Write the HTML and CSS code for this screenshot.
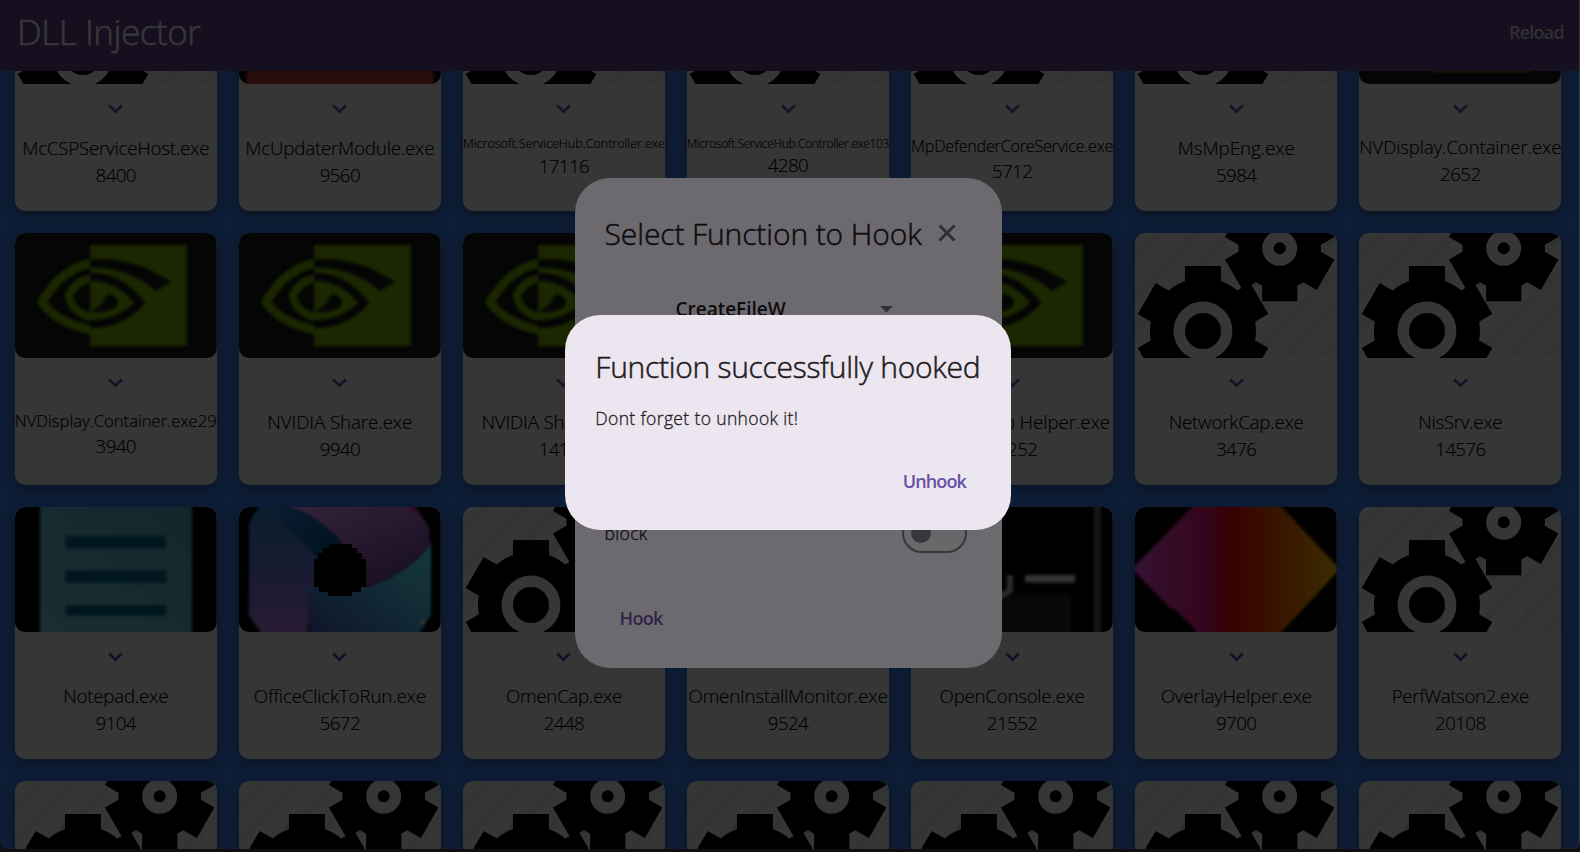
FILE: index.html
```html
<!DOCTYPE html>
<html lang="en">
<head>
<meta charset="utf-8">
<title>DLL Injector</title>
<link rel="stylesheet" href="styles.css">
</head>
<body>
<svg class="defs" aria-hidden="true">
  <defs>
    <pattern id="stripes" width="25.2" height="25.2" patternUnits="userSpaceOnUse" patternTransform="translate(20 0) rotate(45)">
      <rect width="8" height="25.2" fill="#333"/>
    </pattern>
    <filter id="soft" x="-10%" y="-10%" width="120%" height="120%" color-interpolation-filters="sRGB"><feGaussianBlur stdDeviation="1.8"/></filter>
    <clipPath id="eyeLeft"><rect width="75" height="125"/></clipPath>
    <clipPath id="eyeRight"><rect x="75" width="97" height="125"/></clipPath>
    <linearGradient id="note" x1="1" y1="0" x2="0" y2="1"><stop offset="0" stop-color="#10272b"/><stop offset="1" stop-color="#1b2d33"/></linearGradient>
    <linearGradient id="rainbow"><stop offset="0" stop-color="#351235"/><stop offset=".36" stop-color="#33051a"/><stop offset=".48" stop-color="#380000"/><stop offset=".7" stop-color="#371400"/><stop offset="1" stop-color="#3a2d00"/></linearGradient>
    <linearGradient id="offA" x1="0" y1="0" x2="0" y2="1"><stop offset="0" stop-color="#0a1c2c"/><stop offset=".5" stop-color="#171a30"/><stop offset="1" stop-color="#2a1b33"/></linearGradient>
    <linearGradient id="offB" x1="0" y1="0" x2=".7" y2="1"><stop offset="0" stop-color="#35233a"/><stop offset="1" stop-color="#190f22"/></linearGradient>
    <linearGradient id="offC" x1="0" y1="1" x2="1" y2="0"><stop offset="0" stop-color="#101329"/><stop offset=".4" stop-color="#102434"/><stop offset="1" stop-color="#153a39"/></linearGradient>
    <linearGradient id="offD" x1="0" y1="0" x2="1" y2=".4"><stop offset="0" stop-color="#0b1f33"/><stop offset="1" stop-color="#001321"/></linearGradient>

    <symbol id="gears" viewBox="0 0 201.7 125" preserveAspectRatio="none">
      <rect width="202" height="125" fill="#363636"/>
      <rect width="202" height="125" fill="url(#stripes)"/>
      <g transform="translate(68 98)">
        <circle r="53"/>
        <rect x="-18" y="-65" width="36" height="130"/><rect x="-18" y="-65" width="36" height="130" transform="rotate(60)"/><rect x="-18" y="-65" width="36" height="130" transform="rotate(120)"/>
        <circle r="29.5" fill="#363636"/>
        <circle r="18"/>
      </g>
      <g transform="translate(144.7 15.3)">
        <circle r="41.3"/>
        <rect x="-17.6" y="-53" width="35.2" height="106"/><rect x="-17.6" y="-53" width="35.2" height="106" transform="rotate(60)"/><rect x="-17.6" y="-53" width="35.2" height="106" transform="rotate(120)"/>
        <circle r="17.5" fill="#363636"/>
        <circle r="6"/>
      </g>
    </symbol>

    <symbol id="nvidia" viewBox="0 0 201.7 125">
      <rect width="202" height="125" fill="#050505"/>
      <g filter="url(#soft)">
        <rect x="75" y="12" width="97" height="101" fill="#1a2700"/>
        <g clip-path="url(#eyeLeft)" fill="none" stroke="#1a2700">
          <path stroke-width="9" d="M82 30 Q50 31 27 69 Q45 93 82 98"/>
          <path stroke-width="8" d="M82 45 Q60 46 54 63 Q56 80 82 86"/>
        </g>
        <g clip-path="url(#eyeRight)" fill="#050505">
          <path d="M70 27 Q115 21 156 49 L141 58 Q112 32 70 35Z"/>
          <path fill="none" stroke="#050505" stroke-width="8" d="M70 44 Q102 41 125 70 Q103 93 70 91"/>
          <path d="M92 61 Q104 63 103 72 Q93 82 75 78 Q88 74 92 61Z"/>
        </g>
      </g>
    </symbol>

    <symbol id="notepad" viewBox="0 0 201.7 125">
      <rect width="202" height="125"/>
      <g filter="url(#soft)"><rect x="25" y="-8" width="152" height="141" fill="url(#note)"/>
      <g fill="#00171e"><rect x="50.500" y="29" width="100.500" height="12.500"/><rect x="50.500" y="63.500" width="100.500" height="12.500"/><rect x="50.500" y="98" width="100.500" height="10.500"/></g></g>
    </symbol>

    <symbol id="office" viewBox="0 0 201.7 125">
      <rect width="202" height="125"/>
      <g filter="url(#soft)">
        <path fill="url(#offA)" d="M10 16 L22 -4 H90 L101 62 L72 86 L68 130 H25 L10 108Z"/>
        <path fill="url(#offD)" d="M20 -4 H50 Q80 6 101 34 L98 60 L78 50 Q62 30 20 -4Z"/>
        <path fill="url(#offC)" d="M192 35 V108 L178 130 H70 L70 80 L101 70 L130 80 Q180 60 192 35Z"/>
        <path fill="url(#offB)" d="M42 -4 H174 L190 20 L191 38 Q180 58 130 80 L112 60 L101 34 Q80 8 42 -4Z"/>
        <circle cx="17" cy="9" r="2" fill="#00332c"/><circle cx="175" cy="2" r="2.500" fill="#330030"/><circle cx="184" cy="115" r="2.500" fill="#3a3836"/>
      </g>
      <path d="M84 41h6v-4h23v4h5v5h5v6h4v28h-5v5h-9v4h-24v-4h-9v-5h-5v-28h4v-6h5z"/>
    </symbol>

    <symbol id="console" viewBox="0 0 201.7 125">
      <rect width="202" height="125"/>
      <g filter="url(#soft)">
        <rect x="20" y="87" width="140" height="46" fill="#080808"/>
        <path d="M99 68V83L80 96" fill="none" stroke="#2b2b2b" stroke-width="6"/>
        <rect x="114" y="68" width="50" height="7.500" fill="#333"/>
        <rect x="183" y="-8" width="7" height="141" fill="#151717"/>
      </g>
    </symbol>

    <symbol id="diamond" viewBox="0 0 201.7 125">
      <rect width="202" height="125"/>
      <path filter="url(#soft)" fill="url(#rainbow)" d="M-3 62 L62 -5 H142 L205 62 L142 130 H61 V123 L39 102 H36Z"/>
    </symbol>

    <symbol id="mcafee" viewBox="0 0 201.7 125">
      <rect width="202" height="125"/>
      <rect x="7" y="-8" width="188" height="141" fill="#280b0b" filter="url(#soft)"/>
    </symbol>
  </defs>
</svg>

<div class="app">
  <header class="topbar">
    <h1 class="brand" data-w="183.5">DLL Injector</h1>
    <span class="reload" data-w="55">Reload</span>
  </header>
  <main class="viewport"><div class="grid" id="grid"></div></main>
</div>

<div class="layer">
  <section class="dialog picker">
    <div class="picker-head">
      <h2 class="title" data-w="317">Select Function to Hook</h2>
      <svg class="close" viewBox="0 0 18 18"><path d="M1.500 1.500l15 15M16.500 1.500l-15 15"/></svg>
    </div>
    <div class="select"><span data-w="110">CreateFileW</span><svg class="caret" viewBox="0 0 13 6.500"><path d="M0 0h13L6.500 6.500z"/></svg></div>
    <div class="option"><span data-w="43">block</span><span class="switch"><span class="knob"></span></span></div>
    <span class="action hook" data-w="43">Hook</span>
  </section>
</div>
<div class="layer">
  <section class="dialog notice">
    <h2 class="title" data-w="385">Function successfully hooked</h2>
    <p class="message" data-w="203">Dont forget to unhook it!</p>
    <span class="action unhook" data-w="63">Unhook</span>
  </section>
</div>
<script src="app.js"></script>
</body>
</html>
```
FILE: styles.css
```css
* { box-sizing: border-box; }
body {
  margin: 0;
  width: 1580px;
  height: 852px;
  overflow: hidden;
  background: #110f10;
  color: #000;
  font-family: "Open Sans", "Noto Sans", sans-serif;
  font-size: 18.75px;
}
h1, h2, p { margin: 0; font-weight: 400; }
.defs { position: absolute; width: 0; height: 0; }

.app {
  width: 1579px;
  height: 849px;
  display: flex;
  flex-direction: column;
  overflow: hidden;
  background: #0d1d36;
  border-radius: 0 0 8px 8px;
  box-shadow: 1px 0 0 #343638;
}
.topbar {
  flex: none;
  height: 71px;
  padding: 0 15px 7px 17px;
  display: flex;
  align-items: center;
  justify-content: space-between;
  background: #160f20;
  color: #383838;
}
.brand { font-size: 35px; line-height: 48px; white-space: nowrap; font-weight: 300; -webkit-text-stroke: .6px; color: #383838; }
.reload { font-size: 18px; font-weight: 600; line-height: 26px; color: #303030; }

.viewport { flex: 1; min-height: 0; overflow: hidden; }
.grid {
  margin-top: -112px;
  padding: 0 17px 0 14.900px;
  display: grid;
  grid-template-columns: repeat(7, 201.7px);
  column-gap: 22.420px;
  row-gap: 22.4px;
}
.card {
  height: 251.7px;
  display: flex;
  flex-direction: column;
  align-items: center;
  overflow: hidden;
  background: #363636;
  border-radius: 10px;
}
.cell { border-radius: 10px; box-shadow: 0 4px 10px rgba(11, 19, 31, .8); }
.pic { flex: none; display: block; width: 201.7px; height: 125px; }
.pic-round { border-radius: 10px; }
.chevron { flex: none; width: 15px; height: 10px; margin: 20.200px 0 19.600px; }
.chevron path { fill: none; stroke: #181027; stroke-width: 2.600; }
.name, .pid { line-height: 1.440em; white-space: nowrap; font-weight: 300; -webkit-text-stroke: .15px; }
.name-fitted { margin: 1.500px 0 -1.500px; }

.layer { position: fixed; top: 0; left: 0; width: 1576.200px; height: 845px; display: flex; align-items: center; justify-content: center; }
.dialog { border-radius: 35px; white-space: nowrap; }
.title { font-size: 30px; line-height: 40px; font-weight: 300; -webkit-text-stroke: .5px; }
.action { font-weight: 600; font-size: 18px; line-height: 26px; }

.picker { width: 427px; height: 490px; padding: 36px 35px 30px 30px; display: flex; flex-direction: column; background: #6d6a6f; color: #0d0c0e; }
.picker-head { display: flex; justify-content: space-between; align-items: center; height: 40px; padding-right: 11px; }
.picker-head .title { margin-top: 1px; }
.close { width: 18px; height: 18px; margin-bottom: 1px; }
.close path { fill: none; stroke: #302e33; stroke-width: 3; }
.select { display: flex; justify-content: space-between; align-items: center; margin-top: 41.500px; padding: 0 74px 0 71px; height: 28px; font-weight: 600; font-size: 19px; }
.caret { width: 13px; height: 6.500px; fill: #323133; }
.option { display: flex; justify-content: space-between; align-items: center; margin-top: 189.500px; height: 40px; font-size: 17.500px; font-weight: 300; -webkit-text-stroke: .3px; }
.switch { display: flex; align-items: center; width: 65px; height: 40px; padding-left: 7.500px; border: 2.500px solid #38363a; border-radius: 20px; background: #696769; }
.knob { width: 20px; height: 20px; border-radius: 50%; background: #38363a; }
.hook { margin: 52px 0 0 15px; color: #2e2449; }

.notice { width: 445.500px; height: 215px; padding: 32px 30px 28px; display: flex; flex-direction: column; background: #ece6f0; color: #1d1b20; }
.message { margin-top: 18px; font-size: 17.500px; line-height: 26px; font-weight: 300; -webkit-text-stroke: .3px; }
.unhook { margin: 37px 15px 0 0; align-self: flex-end; color: #6750a4; }
[data-w] { white-space: pre; }
```
FILE: app.js
```js
const BASE = 18.75;
// icon, process name, pid, label width, label scale
const cards = [
  ['gears', 'McCSPServiceHost.exe', '8400', 187, 1],
  ['mcafee', 'McUpdaterModule.exe', '9560', 189, 1],
  ['gears', 'Microsoft.ServiceHub.Controller.exe', '17116', 202, .667],
  ['gears', 'Microsoft.ServiceHub.Controller.exe103', '4280', 202, .635],
  ['gears', 'MpDefenderCoreService.exe', '5712', 202, .86],
  ['gears', 'MsMpEng.exe', '5984', 117, 1],
  ['nvidia', 'NVDisplay.Container.exe', '2652', 202, .985],
  ['nvidia', 'NVDisplay.Container.exe29', '3940', 202, .89],
  ['nvidia', 'NVIDIA Share.exe', '9940', 145, 1],
  ['nvidia', 'NVIDIA Share.exe55', '14160', 165, 1],
  ['nvidia', '', '', 145, 1],
  ['nvidia', 'NVIDIA Web Helper.exe', '11252', 196, 1],
  ['gears', 'NetworkCap.exe', '3476', 135, 1],
  ['gears', 'NisSrv.exe', '14576', 84, 1],
  ['notepad', 'Notepad.exe', '9104', 105, 1],
  ['office', 'OfficeClickToRun.exe', '5672', 172, 1],
  ['gears', 'OmenCap.exe', '2448', 116, 1],
  ['gears', 'OmenInstallMonitor.exe', '9524', 199, 1],
  ['console', 'OpenConsole.exe', '21552', 145, 1],
  ['diamond', 'OverlayHelper.exe', '9700', 151, 1],
  ['gears', 'PerfWatson2.exe', '20108', 137, 1],
];
for (let i = 0; i < 7; i++) cards.push(['gears', '', '', 0, 1]);

document.getElementById('grid').innerHTML = cards.map(([icon, name, pid, w, k]) => `
  <div class="cell"><article class="card">
    <svg class="pic ${icon === 'gears' ? '' : 'pic-round'}"><use href="#${icon}"/></svg>
    <svg class="chevron" viewBox="0 0 15 10"><path d="M1.100 1.300l6.400 6.400 6.400-6.400"/></svg>
    <span class="name ${k < .95 ? 'name-fitted' : ''}" data-w="${w}" style="font-size:${BASE * k}px">${name}</span>
    <span class="pid" data-w="${pid.length * 10.1}">${pid}</span>
  </article></div>`).join('');

// Fit every label to its slot by tracking
for (const el of document.querySelectorAll('[data-w]')) {
  const n = el.textContent.length;
  if (!n) continue;
  const range = document.createRange();
  range.selectNodeContents(el);
  el.style.letterSpacing = (+el.dataset.w - range.getBoundingClientRect().width) / n + 'px';
}
```
